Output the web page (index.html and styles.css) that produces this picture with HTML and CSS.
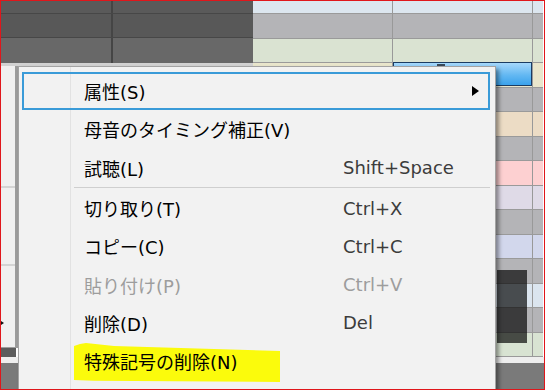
FILE: index.html
```html
<!DOCTYPE html>
<html lang="ja">
<head>
<meta charset="utf-8">
<link rel="stylesheet" href="styles.css">
</head>
<body>
<div class="screen">
  <div class="stage">
    <div class="left">
      <div class="drow d1"><div class="dcell"></div><div class="dcell"></div></div>
      <div class="drow d2"><div class="dcell"></div><div class="dcell"></div></div>
      <div class="drow d3"><div class="dcell"></div><div class="dcell"></div></div>
      <div class="strip"></div>
      <div class="left-body">
        <div class="panel">
          <div class="pseg s1"></div>
          <div class="pseg s2"></div>
          <div class="pseg s3"><span class="tick"></span></div>
        </div>
        <div class="left-fill"></div>
      </div>
      <div class="left-dark"></div>
    </div>
    <div class="roll">
      <div class="row hdr c-hdr"><div class="cell"></div><div class="cell"></div><div class="cell"></div></div>
      <div class="row c-gray"><div class="cell"></div><div class="cell"></div><div class="cell"></div></div>
      <div class="row c-green"><div class="cell"></div><div class="cell"></div><div class="cell"></div></div>
      <div class="row c-yellow"><div class="cell"></div><div class="cell"><div class="note"><span class="note-mark"></span></div></div><div class="cell"></div></div>
      <div class="row c-gray"><div class="cell"></div><div class="cell"></div><div class="cell"></div></div>
      <div class="row c-tan"><div class="cell"></div><div class="cell"></div><div class="cell"></div></div>
      <div class="row c-gray"><div class="cell"></div><div class="cell"></div><div class="cell"></div></div>
      <div class="row c-pink"><div class="cell"></div><div class="cell"></div><div class="cell"></div></div>
      <div class="row c-lav"><div class="cell"></div><div class="cell"></div><div class="cell"></div></div>
      <div class="row c-gray"><div class="cell"></div><div class="cell"></div><div class="cell"></div></div>
      <div class="row c-peri"><div class="cell"></div><div class="cell"></div><div class="cell"></div></div>
      <div class="row c-gray"><div class="cell"></div><div class="cell"></div><div class="cell"></div></div>
      <div class="row c-lblue"><div class="cell"></div><div class="cell"></div><div class="cell"></div></div>
      <div class="row c-gray"><div class="cell"></div><div class="cell"></div><div class="cell"></div></div>
      <div class="row c-lgreen"><div class="cell"></div><div class="cell"></div><div class="cell"></div></div>
    </div>
  </div>
  <div class="hscroll">
    <div class="hs-light"></div>
    <div class="hs-dark"></div>
  </div>

  <div class="dim"></div>

  <div class="menu">
    <div class="marker"></div>
    <div class="item hot"><span class="label">属性(S)</span><span class="arrow"></span></div>
    <div class="item"><span class="label">母音のタイミング補正(V)</span></div>
    <div class="item"><span class="label">試聴(L)</span><span class="key">Shift+Space</span></div>
    <div class="sep"></div>
    <div class="item"><span class="label">切り取り(T)</span><span class="key">Ctrl+X</span></div>
    <div class="item"><span class="label">コピー(C)</span><span class="key">Ctrl+C</span></div>
    <div class="item disabled"><span class="label">貼り付け(P)</span><span class="key">Ctrl+V</span></div>
    <div class="item"><span class="label">削除(D)</span><span class="key">Del</span></div>
    <div class="item"><span class="label">特殊記号の削除(N)</span></div>
  </div>
</div>
</body>
</html>
```
FILE: styles.css
```css
* { box-sizing: border-box; }
html, body { margin: 0; padding: 0; background: #fff; }

.screen {
  position: relative;
  width: 545px;
  height: 390px;
  border: 1px solid #e0161b;
  overflow: hidden;
  display: flex;
  flex-direction: column;
  font-family: "DejaVu Sans", "Noto Sans CJK JP", sans-serif;
}

.stage {
  display: flex;
  height: 356px;
  flex: none;
}

/* left dark header + side panel */
.left {
  width: 252px;
  flex: none;
  display: flex;
  flex-direction: column;
}
.drow { display: flex; border-bottom: 1px solid #474747; }
.drow.d1 { height: 13px; background: #5a5a5a; }
.drow.d2 { height: 24px; background: #585858; }
.drow.d3 { height: 25px; background: #686868; border-bottom: none; }
.dcell:first-child { width: 112px; border-right: 2px solid #454545; }
.strip { height: 3px; background: #d2d2d2; }
.left-body { flex: 1; display: flex; }
.panel {
  width: 17px;
  display: flex;
  flex-direction: column;
  background: #f0f0f0;
  border-right: 3px solid #9c9c9c;
  border-bottom: 1px solid #9c9c9c;
}
.pseg { position: relative; }
.pseg.s1 { height: 122px; border-bottom: 2px solid #d4d4d4; }
.pseg.s2 { height: 78px; border-bottom: 2px solid #d4d4d4; }
.pseg.s3 { flex: 1; }
.tick {
  position: absolute;
  left: 0;
  top: 55px;
  width: 0; height: 0;
  border-top: 2px solid transparent;
  border-bottom: 2px solid transparent;
  border-left: 3px solid #111;
}
.left-fill { flex: 1; background: #efefef; }
.left-dark { height: 9px; background: #5c5c5c; width: 15px; }

/* piano roll grid */
.roll {
  width: 290px;
  flex: none;
  display: flex;
  flex-direction: column;
}
.row {
  display: grid;
  grid-template-columns: 140px 140px 10px;
  height: 24.5px;
  border-bottom: 1px solid #9a9a9a;
}
.row.hdr { height: 13px; }
.cell { border-right: 1px solid #999; position: relative; }
.cell:last-child { border-right: none; }
.c-hdr { background: #dce6ef; }
.c-gray { background: #b4b4b7; }
.c-green { background: #dae3d2; }
.c-yellow { background: #e9e6cc; }
.c-tan { background: #ecdcc5; }
.c-pink { background: #fdd0d1; }
.c-lav { background: #dfdae7; }
.c-peri { background: #d2d7ec; }
.c-lblue { background: #dbe5ef; }
.c-lgreen { background: #d8e3d2; }

.note {
  height: 100%;
  margin-top: -1px;
  border: 1px solid #1b3c62;
  background: linear-gradient(#a6d8fb, #63b8f2 55%, #3aa2ec);
  position: relative;
}
.note-mark {
  position: absolute;
  left: 43px;
  top: 1px;
  width: 8px;
  height: 2px;
  background: #3a4a5a;
}

/* bottom scrollbar */
.hscroll { flex: 1; display: flex; flex-direction: column; }
.hs-light { height: 6px; background: #eeeeee; }
.hs-dark { flex: 1; background: #7a7a7a; }

/* dark translucent block at right */
.dim {
  position: absolute;
  left: 496px;
  top: 269px;
  width: 30px;
  height: 73px;
  background: rgba(0, 0, 0, 0.67);
}

/* context menu */
.menu {
  position: absolute;
  left: 17px;
  top: 65px;
  width: 478px;
  height: 340px;
  background:
    linear-gradient(to right, transparent 51px, #e2e2e2 51px, #e2e2e2 52px, transparent 52px),
    #f2f2f2;
  border: 1px solid #a3a3a3;
  box-shadow: 3px 3px 4px rgba(0, 0, 0, 0.4);
  padding: 5px 5px 0 3px;
  display: flex;
  flex-direction: column;
}
.item {
  position: relative;
  z-index: 1;
  height: 38.3px;
  flex: none;
  display: flex;
  align-items: center;
  border: 2px solid transparent;
  padding-left: 60px;
  font-size: 18px;
  color: #000;
}
.item.hot { border-color: #3a9bd8; }
.label { width: 259px; flex: none; white-space: nowrap; }
.key { color: #3c3c3c; white-space: nowrap; }
.item.disabled .label, .item.disabled .key { color: #9d9d9d; }
.arrow {
  margin-left: auto;
  margin-right: 9px;
  width: 0; height: 0;
  border-top: 5.5px solid transparent;
  border-bottom: 5.5px solid transparent;
  border-left: 7px solid #000;
}
.sep {
  height: 1px;
  flex: none;
  margin: 0 0 1px 52px;
  background: #cfcfcf;
}
.marker {
  position: absolute;
  left: 55px;
  top: 276px;
  width: 206px;
  height: 39px;
  background: #fbfb0c;
  clip-path: polygon(0 3px, 6px 1px, 12px 0, 40px 3px, 100% 8px, 100% 100%, 20px 97%, 0 95%);
}
```
